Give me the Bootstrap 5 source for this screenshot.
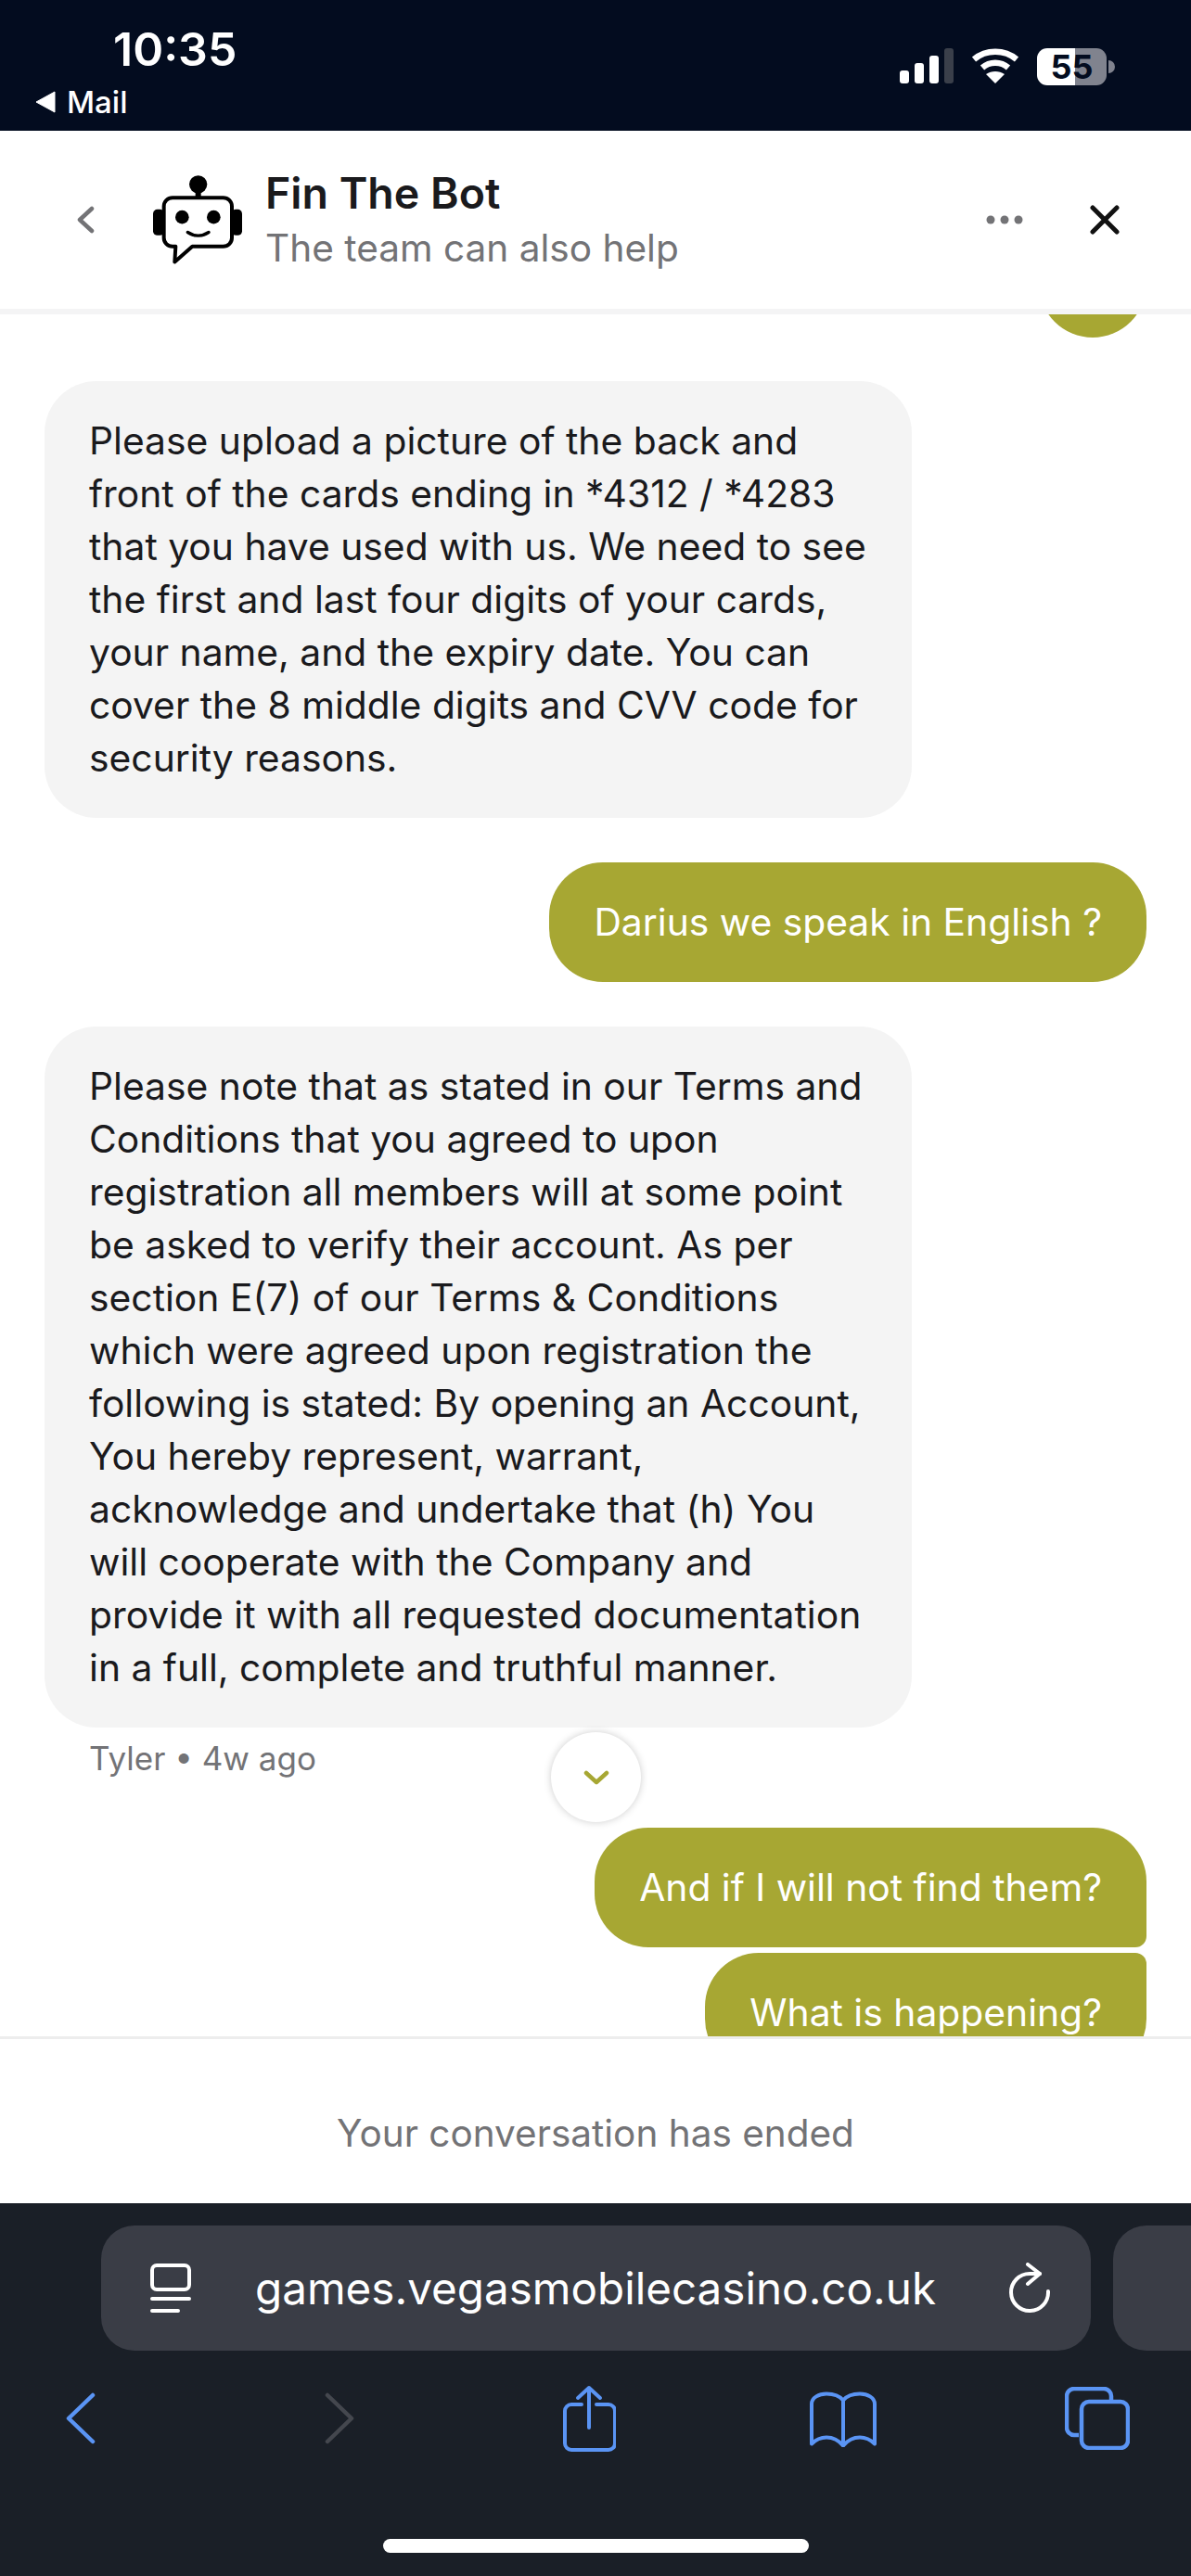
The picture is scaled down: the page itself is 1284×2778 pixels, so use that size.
<!DOCTYPE html>
<html lang="en">
<head>
  <meta charset="UTF-8">
  <title>Fin The Bot</title>
  <link href="https://cdn.jsdelivr.net/npm/bootstrap@5.3.2/dist/css/bootstrap.min.css" rel="stylesheet">
  <style>
    html, body { height: 2778px; overflow: hidden; }
    body { font-family: Inter, "Liberation Sans", sans-serif; background: #fff; color: #1a1a1d; }
    .app-shell { width: 1284px; height: 2778px; }

    .status-bar { height: 141px; background: #030c1f; color: #fff; padding: 25px 82px 0 38px; }
    .status-time { font-size: 50px; line-height: 56px; font-weight: 600; margin-left: 84px; }
    .status-back { font-size: 33px; line-height: 36px; margin-top: 11px; gap: 12px; font-weight: 500; }
    .status-icons { gap: 19px; margin-top: 27px; }
    .battery-level { width: 75px; height: 40px; border-radius: 11px; background: linear-gradient(90deg, #fff 55%, #80838e 55%); color: #030c1f; font-size: 36px; font-weight: 700; line-height: 40px; text-align: center; }
    .battery-nub { width: 7px; height: 14px; background: #80838e; border-radius: 0 7px 7px 0; margin-left: 2px; }

    .chat-header { height: 198px; border-bottom: 6px solid #f4f4f5; padding: 0 77px 0 83px; flex-shrink: 0; }
    .bot-logo { margin: 0 25px 0 63px; }
    .bot-title { font-size: 46.5px; line-height: 56px; font-weight: 600; }
    .bot-sub { font-size: 40.6px; line-height: 52px; color: #737376; margin-top: 6px; }
    .header-actions { gap: 72px; }

    .chat-area { height: 1857px; overflow: hidden; padding: 0 48px; }
    .msg-in, .msg-out { font-size: 40.8px; line-height: 57px; }
    .msg-in { width: 935px; background: #f4f4f4; color: #1a1a1d; border-radius: 56px; padding: 36px 48px; margin-bottom: 48px; flex-shrink: 0; }
    .msg-out { background: #a7a733; color: #fff; border-radius: 58px; padding: 36px 48px; align-self: flex-end; white-space: nowrap; flex-shrink: 0; }
    .msg-stub { width: 116px; height: 116px; margin: -91px 0 47px 0; padding: 0; }
    .msg-gap { margin-bottom: 48px; }
    .msg-top { border-bottom-right-radius: 12px; margin-bottom: 6px; }
    .msg-last { border-top-right-radius: 12px; }
    .msg-meta { font-size: 35px; line-height: 44px; color: #737376; margin: -37px 0 53px 48px; }
    .scroll-down { left: 594px; top: 1868px; width: 97px; height: 97px; background: #fff; box-shadow: 0 0 8px rgba(0,0,0,.2); z-index: 2; }

    .chat-ended { height: 180px; border-top: 3px solid #ededed; color: #737376; font-size: 40.5px; padding-top: 28px; flex-shrink: 0; }

    .safari-bar { height: 402px; background: #1a1f27; padding-top: 24px; flex-shrink: 0; overflow: hidden; }
    .url-row { gap: 24px; padding-left: 109px; height: 135px; }
    .url-pill { width: 1067px; height: 135px; background: #3a3d46; border-radius: 36px; color: #fff; font-size: 47.6px; padding: 0 42px 0 53px; flex-shrink: 0; }
    .url-next { width: 200px; height: 135px; background: #3a3d46; border-radius: 36px 0 0 36px; flex-shrink: 0; }
    .url-text { margin-left: 69px; }
    .tool-row { height: 72px; margin: 37px 0 0 -50px; }
    .tool-slot { width: 274px; flex-shrink: 0; }
    .tool-fwd { margin-left: 10px; }
    .home-bar { width: 459px; height: 15px; background: #fff; border-radius: 8px; margin: 94px auto 0; }
  </style>
</head>
<body>
  <div class="app-shell d-flex flex-column position-relative">

    <div class="status-bar d-flex justify-content-between flex-shrink-0">
      <div>
        <div class="status-time">10:35</div>
        <div class="status-back d-flex align-items-center">
          <svg width="22" height="24" viewBox="0 0 22 24"><path d="M21 1V23L1 12Z" fill="#fff" stroke="#fff" stroke-linejoin="round"/></svg>
          <span>Mail</span>
        </div>
      </div>
      <div class="status-icons d-flex align-items-start">
        <svg width="58" height="38" viewBox="0 0 58 38">
          <rect x="0" y="24" width="10" height="14" rx="3" fill="#fff"/>
          <rect x="16" y="16" width="10" height="22" rx="3" fill="#fff"/>
          <rect x="32" y="8" width="10" height="30" rx="3" fill="#fff"/>
          <rect x="48" y="0" width="10" height="38" rx="3" fill="#3a3f4a"/>
        </svg>
        <svg width="52" height="38" viewBox="0 0 52 38" fill="none" stroke="#fff" stroke-width="6.5">
          <path d="M3 12C16 1 36 1 49 12"/>
          <path d="M12 21C20 14 32 14 40 21"/>
          <path d="M26 38L16 28C22 24 30 24 36 28Z" fill="#fff" stroke="none"/>
        </svg>
        <div class="d-flex align-items-center">
          <div class="battery-level">55</div>
          <div class="battery-nub"></div>
        </div>
      </div>
    </div>

    <div class="chat-header d-flex align-items-center">
      <svg width="19" height="30" viewBox="0 0 19 30" fill="none" stroke="#737376" stroke-width="4.5" stroke-linecap="round" stroke-linejoin="round"><path d="M16 3L3 15L16 27"/></svg>
      <svg class="bot-logo" width="96" height="96" viewBox="135 88 288 287">
        <circle cx="281" cy="117" r="29"/>
        <rect x="272" y="140" width="18" height="22"/>
        <rect x="135" y="198" width="36" height="84" rx="14"/>
        <rect x="389" y="198" width="34" height="84" rx="14"/>
        <path d="M198 160H362a28 28 0 0 1 28 28V290a28 28 0 0 1-28 28H262L205 368L208 318H198a28 28 0 0 1-28-28V188a28 28 0 0 1 28-28Z" fill="#fff" stroke="#000" stroke-width="12" stroke-linejoin="round"/>
        <circle cx="229" cy="223" r="22"/>
        <circle cx="331" cy="223" r="22"/>
        <path d="M247 272Q281 294 315 272" fill="none" stroke="#000" stroke-width="10" stroke-linecap="round"/>
      </svg>
      <div class="flex-grow-1">
        <div class="bot-title">Fin The Bot</div>
        <div class="bot-sub">The team can also help</div>
      </div>
      <div class="header-actions d-flex align-items-center">
        <svg width="40" height="10" viewBox="0 0 40 10" fill="#737376"><circle cx="5" cy="5" r="4.5"/><circle cx="20" cy="5" r="4.5"/><circle cx="35" cy="5" r="4.5"/></svg>
        <svg width="32" height="32" viewBox="0 0 32 32" stroke="#111" stroke-width="5" stroke-linecap="round"><path d="M3 3L29 29M29 3L3 29"/></svg>
      </div>
    </div>

    <div class="chat-area d-flex flex-column flex-shrink-0">
      <div class="msg-out msg-stub"></div>
      <div class="msg-in">Please upload a picture of the back and front of the cards ending in *4312 / *4283 that you have used with us. We need to see the first and last four digits of your cards, your name, and the expiry date. You can cover the 8 middle digits and CVV code for security reasons.</div>
      <div class="msg-out msg-gap">Darius we speak in English ?</div>
      <div class="msg-in">Please note that as stated in our Terms and Conditions that you agreed to upon registration all members will at some point be asked to verify their account. As per section E(7) of our Terms &amp; Conditions which were agreed upon registration the following is stated: By opening an Account, You hereby represent, warrant, acknowledge and undertake that (h) You will cooperate with the Company and provide it with all requested documentation in a full, complete and truthful manner.</div>
      <div class="msg-meta">Tyler • 4w ago</div>
      <div class="msg-out msg-top">And if I will not find them?</div>
      <div class="msg-out msg-last">What is happening?</div>
    </div>

    <div class="scroll-down position-absolute rounded-circle d-flex align-items-center justify-content-center">
      <svg width="28" height="16" viewBox="0 0 28 16" fill="none" stroke="#a7a733" stroke-width="4.5" stroke-linecap="round" stroke-linejoin="round"><path d="M3 3L14 13L25 3"/></svg>
    </div>

    <div class="chat-ended d-flex align-items-center justify-content-center">Your conversation has ended</div>

    <div class="safari-bar">
      <div class="url-row d-flex">
        <div class="url-pill d-flex align-items-center">
          <svg width="44" height="54" viewBox="0 0 44 54" fill="none" stroke="#fff" stroke-width="4" stroke-linecap="round">
            <rect x="2" y="2" width="40" height="26" rx="5"/>
            <path d="M2 38H42M2 51H30"/>
          </svg>
          <span class="url-text flex-grow-1">games.vegasmobilecasino.co.uk</span>
          <svg width="46" height="56" viewBox="0 0 46 56" fill="none" stroke="#fff" stroke-width="4" stroke-linecap="round" stroke-linejoin="round">
            <path d="M33 12H22A20 20 0 1 0 42 31"/>
            <path d="M20 2L33 12L20 23"/>
          </svg>
        </div>
        <div class="url-next"></div>
      </div>
      <div class="tool-row d-flex align-items-center">
        <div class="tool-slot d-flex justify-content-center">
          <svg width="34" height="56" viewBox="0 0 34 56" fill="none" stroke="#5a94f4" stroke-width="4.5" stroke-linecap="round" stroke-linejoin="round"><path d="M30 3L4 28L30 53"/></svg>
        </div>
        <div class="tool-slot d-flex justify-content-center">
          <svg class="tool-fwd" width="34" height="56" viewBox="0 0 34 56" fill="none" stroke="#44474e" stroke-width="4.5" stroke-linecap="round" stroke-linejoin="round"><path d="M4 3L30 28L4 53"/></svg>
        </div>
        <div class="tool-slot d-flex justify-content-center">
          <svg width="58" height="72" viewBox="0 0 58 72" fill="none" stroke="#5a94f4" stroke-width="4" stroke-linecap="round" stroke-linejoin="round">
            <path d="M21 21H10a7 7 0 0 0-7 7V63a7 7 0 0 0 7 7H50a7 7 0 0 0 7-7V28a7 7 0 0 0-7-7H37"/>
            <path d="M29 46V3M17 14L29 3L41 14"/>
          </svg>
        </div>
        <div class="tool-slot d-flex justify-content-center">
          <svg width="72" height="62" viewBox="0 -1.5 72 62" fill="none" stroke="#5a94f4" stroke-width="4" stroke-linejoin="round" stroke-linecap="round">
            <path d="M36 10C31 4 24 3 18 3C10 3 2 7 2 14V57C7 52 12 50 18 50C25 50 31 53 36 59C41 53 47 50 54 50C60 50 65 52 70 57V14C70 7 62 3 54 3C48 3 41 4 36 10ZM36 10V59"/>
          </svg>
        </div>
        <div class="tool-slot d-flex justify-content-center">
          <svg width="70" height="68" viewBox="0 0 70 68" fill="none" stroke="#5a94f4" stroke-width="4.5" stroke-linejoin="round">
            <path d="M15 52H10a8 8 0 0 1-8-8V10a8 8 0 0 1 8-8H42a8 8 0 0 1 8 8V15"/>
            <rect x="18" y="16" width="50" height="50" rx="8"/>
          </svg>
        </div>
      </div>
      <div class="home-bar"></div>
    </div>
  </div>
  <script src="https://cdn.jsdelivr.net/npm/bootstrap@5.3.2/dist/js/bootstrap.bundle.min.js"></script>
</body>
</html>
